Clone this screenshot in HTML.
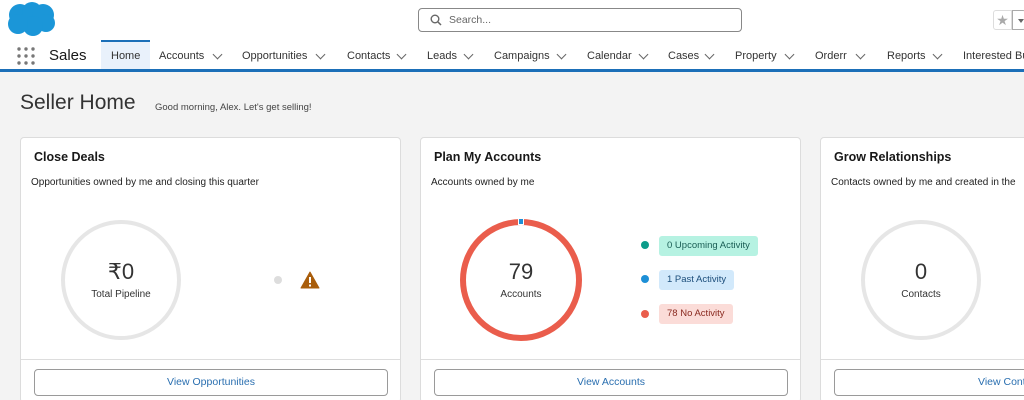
<!DOCTYPE html>
<html><head><meta charset="utf-8"><style>
*{margin:0;padding:0;box-sizing:border-box}
html{width:1024px;height:400px;overflow:hidden}
body{width:1024px;height:400px;overflow:hidden;background:#f3f3f3;font-family:"Liberation Sans",sans-serif;color:#181818;position:relative}
.abs{position:absolute}
.hdr{left:0;top:0;width:1024px;height:70px;background:#fff}
.nav{font-size:11px;color:#333;top:50px;white-space:nowrap}
.chev{width:7px;height:7px;border-right:1.3px solid #666;border-bottom:1.3px solid #666;transform:rotate(45deg);top:51px}
.card{background:#fff;border:1px solid #dcdcdc;border-radius:4px;top:137px;height:266px}
.ct{font-weight:bold;font-size:12.5px;top:12px}
.cs{font-size:10px;top:39px;color:#222}
.div{left:0;right:0;top:221px;border-top:1px solid #ddd}
.btn{top:231px;height:27px;border:1px solid #9a9a9a;border-radius:4px;font-size:10.5px;color:#2a6fb0;text-align:center;line-height:25px}
.num{font-size:22px;color:#333;text-align:center;width:120px;font-weight:300}
.lbl{font-size:10px;color:#333;text-align:center;width:120px}
.badge{font-size:9.5px;height:20px;line-height:20px;padding:0 8px;border-radius:3px}
.dot{width:8px;height:8px;border-radius:50%}
</style></head><body>
<div class="abs hdr"></div>
<svg class="abs" style="left:6px;top:2px" width="50" height="36" viewBox="0 0 50 36"><g fill="#1b96d8"><circle cx="14" cy="13" r="11"/><circle cx="26" cy="10" r="10"/><circle cx="37" cy="13" r="11"/><circle cx="40" cy="21" r="9"/><circle cx="27" cy="24" r="10"/><circle cx="12" cy="22" r="10"/></g></svg>
<div class="abs" style="left:418px;top:8px;width:324px;height:24px;border:1px solid #888;border-radius:4px"></div>
<svg class="abs" style="left:430px;top:14px" width="12" height="12"><circle cx="5" cy="5" r="3.8" stroke="#666" stroke-width="1.4" fill="none"/><line x1="8" y1="8" x2="11" y2="11" stroke="#666" stroke-width="1.5"/></svg>
<div class="abs" style="left:449px;top:14px;font-size:10.5px;color:#666">Search...</div>
<div class="abs" style="left:993px;top:10px;width:19px;height:20px;border:1px solid #ddd;border-radius:3px 0 0 3px;color:#aaa;font-size:14px;text-align:center;line-height:19px">★</div>
<div class="abs" style="left:1012px;top:10px;width:14px;height:20px;border:1px solid #aaa;border-radius:0 3px 3px 0"></div>
<div class="abs" style="left:1018px;top:19px;border:3px solid transparent;border-top:4px solid #666"></div>
<svg class="abs" style="left:17px;top:47px" width="18" height="18"><g fill="#777"><circle cx="2" cy="2" r="1.7"/><circle cx="9" cy="2" r="1.7"/><circle cx="16" cy="2" r="1.7"/><circle cx="2" cy="9" r="1.7"/><circle cx="9" cy="9" r="1.7"/><circle cx="16" cy="9" r="1.7"/><circle cx="2" cy="16" r="1.7"/><circle cx="9" cy="16" r="1.7"/><circle cx="16" cy="16" r="1.7"/></g></svg>
<div class="abs" style="left:49px;top:47px;font-size:15px;color:#181818">Sales</div>
<div class="abs" style="left:101px;top:40px;width:49px;height:30px;background:#e9f1fb;border-top:2px solid #1b6fb8"></div>
<div class="abs nav" style="left:111px">Home</div>
<div class="abs nav" style="left:159px">Accounts</div><div class="abs chev" style="left:214px"></div>
<div class="abs nav" style="left:242px">Opportunities</div><div class="abs chev" style="left:317px"></div>
<div class="abs nav" style="left:347px">Contacts</div><div class="abs chev" style="left:398px"></div>
<div class="abs nav" style="left:427px">Leads</div><div class="abs chev" style="left:465px"></div>
<div class="abs nav" style="left:494px">Campaigns</div><div class="abs chev" style="left:558px"></div>
<div class="abs nav" style="left:587px">Calendar</div><div class="abs chev" style="left:640px"></div>
<div class="abs nav" style="left:668px">Cases</div><div class="abs chev" style="left:706px"></div>
<div class="abs nav" style="left:735px">Property</div><div class="abs chev" style="left:786px"></div>
<div class="abs nav" style="left:815px">Orderr</div><div class="abs chev" style="left:857px"></div>
<div class="abs nav" style="left:887px">Reports</div><div class="abs chev" style="left:934px"></div>
<div class="abs nav" style="left:963px">Interested Bu</div>
<div class="abs" style="left:0;top:69px;width:1024px;height:3px;background:#1b6fb8"></div>
<div class="abs" style="left:20px;top:91px;font-size:21px;color:#333;font-weight:300">Seller Home</div>
<div class="abs" style="left:155px;top:102px;font-size:9.5px;color:#444">Good morning, Alex. Let's get selling!</div>

<div class="abs card" style="left:20px;width:381px">
 <div class="abs ct" style="left:13px">Close Deals</div>
 <div class="abs cs" style="left:10px">Opportunities owned by me and closing this quarter</div>
 <svg class="abs" style="left:38px;top:82px" width="124" height="124"><circle cx="62" cy="60" r="58" stroke="#e6e6e6" stroke-width="4" fill="none"/></svg>
 <div class="abs num" style="left:40px;top:121px">₹0</div>
 <div class="abs lbl" style="left:40px;top:151px">Total Pipeline</div>
 <div class="abs dot" style="left:253px;top:138px;background:#ddd"></div>
 <svg class="abs" style="left:279px;top:133px" width="20" height="18"><path d="M10 1 L19 17 L1 17 Z" fill="#a95d0b" stroke="#a95d0b" stroke-linejoin="round"/><rect x="9" y="6" width="2" height="6" fill="#fff"/><rect x="9" y="13.5" width="2" height="2" fill="#fff"/></svg>
 <div class="abs div"></div>
 <div class="abs btn" style="left:13px;width:354px">View Opportunities</div>
</div>

<div class="abs card" style="left:420px;width:381px">
 <div class="abs ct" style="left:13px">Plan My Accounts</div>
 <div class="abs cs" style="left:10px">Accounts owned by me</div>
 <svg class="abs" style="left:38px;top:80px" width="124" height="124"><circle cx="62" cy="62" r="58" stroke="#ea5d4c" stroke-width="6" fill="none"/><path d="M59 3 L65 3" stroke="#fff" stroke-width="8"/><rect x="60" y="1" width="4" height="5" fill="#1d8fd6"/></svg>
 <div class="abs num" style="left:40px;top:121px">79</div>
 <div class="abs lbl" style="left:40px;top:151px">Accounts</div>
 <div class="abs dot" style="left:220px;top:103px;background:#0c9c8a"></div>
 <div class="abs badge" style="left:238px;top:98px;background:#b6f2e2;color:#1a5e55">0 Upcoming Activity</div>
 <div class="abs dot" style="left:220px;top:137px;background:#1d8fd6"></div>
 <div class="abs badge" style="left:238px;top:132px;background:#d2e9fb;color:#1b4d7a">1 Past Activity</div>
 <div class="abs dot" style="left:220px;top:172px;background:#ea5d4c"></div>
 <div class="abs badge" style="left:238px;top:166px;background:#fbdcd8;color:#8a2a20">78 No Activity</div>
 <div class="abs div"></div>
 <div class="abs btn" style="left:13px;width:354px">View Accounts</div>
</div>

<div class="abs card" style="left:820px;width:220px">
 <div class="abs ct" style="left:13px">Grow Relationships</div>
 <div class="abs cs" style="left:10px;white-space:nowrap">Contacts owned by me and created in the</div>
 <svg class="abs" style="left:38px;top:82px" width="124" height="124"><circle cx="62" cy="60" r="58" stroke="#e6e6e6" stroke-width="4" fill="none"/></svg>
 <div class="abs num" style="left:40px;top:121px">0</div>
 <div class="abs lbl" style="left:40px;top:151px">Contacts</div>
 <div class="abs div"></div>
 <div class="abs btn" style="left:13px;width:260px;text-align:left;padding-left:143px;white-space:nowrap">View Contacts</div>
</div>
</body></html>
